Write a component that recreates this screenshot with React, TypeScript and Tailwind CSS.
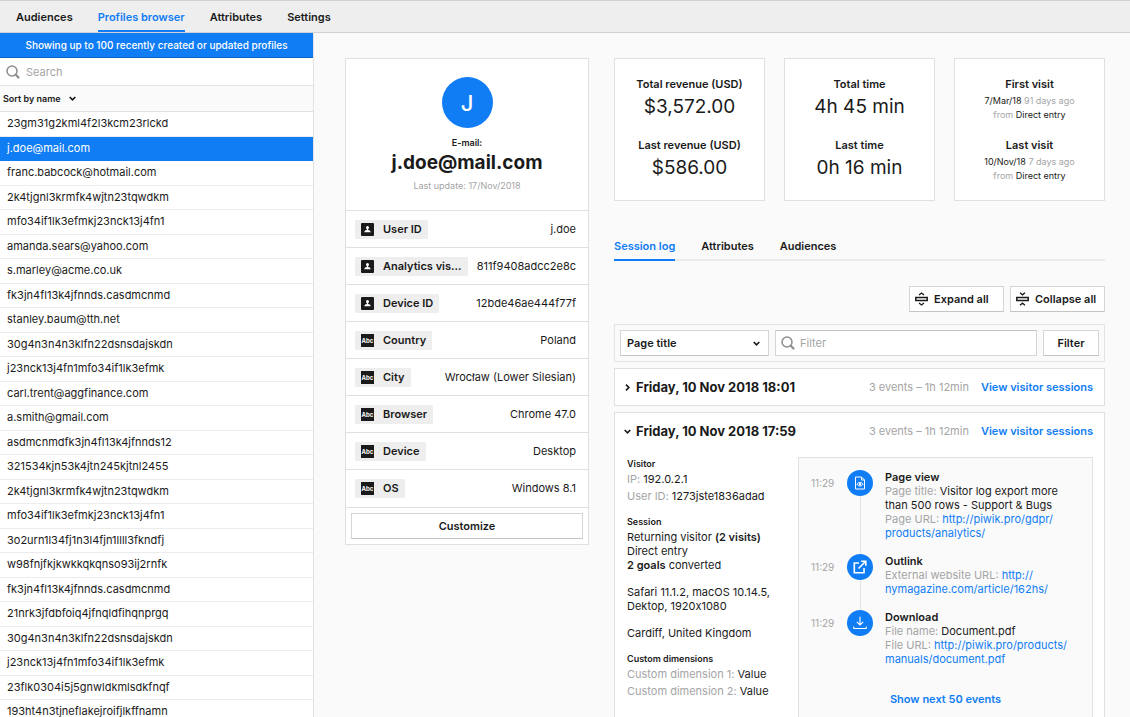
import { useState } from 'react';
import type { ReactNode } from 'react';

const NAV = ['Audiences', 'Profiles browser', 'Attributes', 'Settings'];

const PROFILES = [
  '23gm31g2kml4f2l3kcm23rlckd',
  'j.doe@mail.com',
  'franc.babcock@hotmail.com',
  '2k4tjgnl3krmfk4wjtn23tqwdkm',
  'mfo34if1lk3efmkj23nck13j4fn1',
  'amanda.sears@yahoo.com',
  's.marley@acme.co.uk',
  'fk3jn4fl13k4jfnnds.casdmcnmd',
  'stanley.baum@tth.net',
  '30g4n3n4n3klfn22dsnsdajskdn',
  'j23nck13j4fn1mfo34if1lk3efmk',
  'carl.trent@aggfinance.com',
  'a.smith@gmail.com',
  'asdmcnmdfk3jn4fl13k4jfnnds12',
  '321534kjn53k4jtn245kjtnl2455',
  '2k4tjgnl3krmfk4wjtn23tqwdkm',
  'mfo34if1lk3efmkj23nck13j4fn1',
  '3o2urn1l34fj1n3l4fjn1llll3fkndfj',
  'w98fnjfkjkwkkqkqnso93ij2rnfk',
  'fk3jn4fl13k4jfnnds.casdmcnmd',
  '21nrk3jfdbfoiq4jfnqldfihqnprgq',
  '30g4n3n4n3klfn22dsnsdajskdn',
  'j23nck13j4fn1mfo34if1lk3efmk',
  '23flk0304i5j5gnwldkmlsdkfnqf',
  '193ht4n3tjneflakejroifjlkffnamn',
];

const ATTRIBUTES = [
  { type: 'id', label: 'User ID', value: 'j.doe' },
  { type: 'id', label: 'Analytics vis...', value: '811f9408adcc2e8c' },
  { type: 'id', label: 'Device ID', value: '12bde46ae444f77f' },
  { type: 'text', label: 'Country', value: 'Poland' },
  { type: 'text', label: 'City', value: 'Wrocław (Lower Silesian)' },
  { type: 'text', label: 'Browser', value: 'Chrome 47.0' },
  { type: 'text', label: 'Device', value: 'Desktop' },
  { type: 'text', label: 'OS', value: 'Windows 8.1' },
];

const BUTTON =
  'h-[26px] border border-[#d6d6d6] border-b-[#c4c4c4] bg-white text-[11px] font-semibold cursor-pointer';

function SearchIcon() {
  return (
    <svg className="size-[14px] shrink-0" viewBox="0 0 14 14" fill="none" stroke="#8e8e8e" aria-hidden="true">
      <circle cx="6" cy="6" r="5" strokeWidth="1.5" />
      <path d="M9.800 9.800l2.700 2.700" strokeWidth="2.200" strokeLinecap="round" />
    </svg>
  );
}

function Chevron({ className = '' }: { className?: string }) {
  return (
    <svg
      className={`size-[7px] shrink-0 ${className}`}
      viewBox="0 0 7 7"
      fill="none"
      stroke="#1a1a1a"
      strokeWidth="1.700"
      aria-hidden="true"
    >
      <path d="M.7 2L3.500 4.800 6.300 2" />
    </svg>
  );
}

function AttributeIcon({ type }: { type: string }) {
  if (type === 'id') {
    return (
      <svg className="size-[13px] shrink-0" viewBox="0 0 13 13" aria-hidden="true">
        <rect width="13" height="13" rx="1" fill="#1a1a1a" />
        <path
          d="M6.500 3a1.500 1.500 0 0 0-1.500 1.600c0 .8.4 1.200.9 1.600v.8c-1.300.2-2.400.7-2.600 2.200h6.400C9.500 7.700 8.400 7.200 7.100 7v-.8c.5-.4.9-.8.9-1.600A1.500 1.500 0 0 0 6.500 3z"
          fill="#fff"
        />
      </svg>
    );
  }
  return (
    <svg className="size-[13px] shrink-0" viewBox="0 0 13 13" aria-hidden="true">
      <rect width="13" height="13" fill="#1a1a1a" />
      <text x="6.500" y="8.800" textAnchor="middle" fontSize="6" fontWeight="700" fill="#fff">
        Abc
      </text>
    </svg>
  );
}

function ExpandIcon() {
  return (
    <svg className="h-[14px] w-[13px] shrink-0" viewBox="0 0 13 14" fill="none" stroke="#1a1a1a" aria-hidden="true">
      <rect x=".8" y="5.500" width="11.400" height="3" strokeWidth="1.500" />
      <path d="M4 3l2.500-2L9 3M4 11l2.500 2L9 11" strokeWidth="1.300" />
    </svg>
  );
}

function CollapseIcon() {
  return (
    <svg className="h-[14px] w-[13px] shrink-0" viewBox="0 0 13 14" fill="none" stroke="#1a1a1a" aria-hidden="true">
      <rect x=".8" y="5.500" width="11.400" height="3" strokeWidth="1.500" />
      <path d="M4 .8l2.500 2L9 .8M4 13.200l2.500-2 2.500 2" strokeWidth="1.300" />
    </svg>
  );
}

function PageViewIcon() {
  return (
    <svg className="size-[14px]" viewBox="0 0 14 14" fill="none" stroke="#fff" strokeWidth="1" aria-hidden="true">
      <path d="M2.500 1h6l3 3v9h-9z" />
      <path d="M8.500 1v3h3" />
      <path d="M3.900 8.200c1.500-2.400 4.700-2.400 6.200 0-1.500 2.400-4.700 2.400-6.200 0z" />
      <circle cx="7" cy="8.200" r=".9" fill="#fff" />
    </svg>
  );
}

function OutlinkIcon() {
  return (
    <svg className="size-[14px]" viewBox="0 0 14 14" fill="none" stroke="#fff" strokeWidth="1.600" aria-hidden="true">
      <path d="M6 3H1.300v9.700H11V8" />
      <path d="M5.500 8.500l6.500-6.500" />
      <path d="M8.200 1.200h4.600v4.600" />
    </svg>
  );
}

function DownloadIcon() {
  return (
    <svg className="size-[14px]" viewBox="0 0 14 14" fill="none" stroke="#fff" strokeWidth="1.100" aria-hidden="true">
      <path d="M7 .8v8.200M3.800 5.800L7 9l3.200-3.200" />
      <path d="M.8 10.500v2h12.400v-2" />
    </svg>
  );
}

function Sidebar() {
  const [selected, setSelected] = useState(1);

  return (
    <aside className="w-[314px] shrink-0 flex flex-col bg-white border-r border-[#e2e2e2]">
      <p className="h-[25px] shrink-0 flex items-center justify-center bg-[#117df4] border-b border-[#0b62c4] text-white text-[10px] font-medium">
        Showing up to 100 recently created or updated profiles
      </p>
      <label className="h-7 shrink-0 flex items-center gap-[6px] pl-[6px] pt-px border-b border-[#e4e4e4]">
        <SearchIcon />
        <input
          type="search"
          placeholder="Search"
          aria-label="Search profiles"
          className="w-full outline-none text-[11px] placeholder:text-[#a5a5a5]"
        />
      </label>
      <button
        type="button"
        className="h-[26px] shrink-0 flex items-center gap-2 pl-[3px] bg-[#fafafa] border-b border-[#e0e0e0] text-[9px] font-semibold"
      >
        Sort by name
        <Chevron />
      </button>
      <ul className="min-h-0 flex-1 overflow-y-auto [scrollbar-width:none]">
        {PROFILES.map((name, i) => (
          <li key={i} className="h-[25px] even:h-6">
            <button
              type="button"
              onClick={() => setSelected(i)}
              className={`size-full flex items-center pl-[7px] pb-px border-b text-[11px] ${
                i === selected ? 'bg-[#117df4] border-[#117df4] text-white' : 'border-[#ececec]'
              }`}
            >
              {name}
            </button>
          </li>
        ))}
      </ul>
    </aside>
  );
}

function ProfileCard() {
  return (
    <section className="w-[244px] shrink-0 bg-white border border-[#e0e0e0]">
      <div className="flex flex-col items-center pt-[18px] pb-[17px]">
        <div className="size-[51px] flex items-center justify-center pt-[2px] rounded-full bg-[#117df4] text-white text-[22px] font-medium">
          J
        </div>
        <span className="mt-2 text-[9px] leading-[14px] font-semibold">E-mail:</span>
        <h1 className="text-[19px] leading-[26px] font-bold">j.doe@mail.com</h1>
        <span className="mt-[3px] text-[9px] leading-[14px] text-[#a5a5a5]">Last update: 17/Nov/2018</span>
      </div>
      <dl>
        {ATTRIBUTES.map(({ type, label, value }) => (
          <div
            key={label}
            className="h-[37px] last:h-[38px] flex items-center justify-between border-t border-[#e0e0e0] pl-[9px] pr-3"
          >
            <dt className="h-[19px] flex items-center gap-[9px] rounded-[1px] bg-[#eee] px-[6px] text-[11px] font-semibold">
              <AttributeIcon type={type} />
              {label}
            </dt>
            <dd className="text-[11px]">{value}</dd>
          </div>
        ))}
      </dl>
      <div className="border-t border-[#e0e0e0] p-[5px]">
        <button type="button" className={`w-full ${BUTTON}`}>
          Customize
        </button>
      </div>
    </section>
  );
}

function StatCard({ children }: { children: ReactNode }) {
  return (
    <div className="h-[143px] flex flex-col gap-[15px] items-center pt-[17px] bg-white border border-[#e0e0e0] text-center">
      {children}
    </div>
  );
}

function Stat({ label, value }: { label: string; value: string }) {
  return (
    <div>
      <h2 className="text-[11px] leading-4 font-semibold">{label}</h2>
      <p className="text-[19px] leading-[30px]">{value}</p>
    </div>
  );
}

function Visit({ label, date, ago }: { label: string; date: string; ago: string }) {
  return (
    <div className="text-[9px] leading-[14px] text-[#a5a5a5]">
      <h2 className="mb-[2px] text-[11px] leading-4 font-semibold text-[#1a1a1a]">{label}</h2>
      <p>
        <span className="text-[#1a1a1a]">{date}</span> {ago}
      </p>
      <p>
        from <span className="text-[#1a1a1a]">Direct entry</span>
      </p>
    </div>
  );
}

function SessionHeader({ date, open }: { date: string; open?: boolean }) {
  return (
    <div className="h-9 flex items-center pt-px pl-[9px] pr-[11px]">
      <button type="button" aria-expanded={!!open} className="flex items-center gap-[5px] text-[13px] font-bold">
        <Chevron className={open ? '' : '-rotate-90'} />
        {date}
      </button>
      <span className="ml-auto text-[11px] text-[#a5a5a5]">3 events – 1h 12min</span>
      <a href="#sessions" className="ml-3 text-[11px] font-semibold text-[#117df4]">
        View visitor sessions
      </a>
    </div>
  );
}

function Url({ parts }: { parts: string[] }) {
  return (
    <a href={parts.join('')} className="text-[#117df4]">
      {parts[0]}
      <wbr />
      {parts[1]}
    </a>
  );
}

function Event({ icon, title, last, children }: { icon: ReactNode; title: string; last?: boolean; children: ReactNode }) {
  return (
    <li className="flex">
      <time className="w-9 shrink-0 text-[10px] leading-[26px] text-[#a5a5a5]">11:29</time>
      <div className="w-[26px] shrink-0 flex flex-col items-center">
        <span className="size-[26px] shrink-0 flex items-center justify-center rounded-full bg-[#117df4]">{icon}</span>
        {!last && <span className="w-px flex-1 bg-[#e4e4e4]" />}
      </div>
      <div className="ml-3 pb-[14px] text-[11px] leading-[14px] text-[#a5a5a5]">
        <h3 className="font-semibold text-[#1a1a1a]">{title}</h3>
        {children}
      </div>
    </li>
  );
}

function VisitorInfo() {
  return (
    <div className="w-[171px] shrink-0 text-[11px] leading-[14px] [font-variant-ligatures:no-contextual]">
      <h3 className="text-[9px] font-semibold">Visitor</h3>
      <p className="mt-px">
        <span className="text-[#a5a5a5]">IP:</span> 192.0.2.1
      </p>
      <p className="mt-[3px]">
        <span className="text-[#a5a5a5]">User ID:</span> 1273jste1836adad
      </p>
      <h3 className="mt-3 text-[9px] font-semibold">Session</h3>
      <p className="mt-px">
        Returning visitor <b className="font-semibold">(2 visits)</b>
      </p>
      <p>Direct entry</p>
      <p>
        <b className="font-semibold">2 goals</b> converted
      </p>
      <p className="mt-[13px] pr-4">Safari 11.1.2, macOS 10.14.5, Dektop, 1920x1080</p>
      <p className="mt-[13px]">Cardiff, United Kingdom</p>
      <h3 className="mt-3 text-[9px] font-semibold">Custom dimensions</h3>
      <p className="mt-px">
        <span className="text-[#a5a5a5]">Custom dimension 1:</span> Value
      </p>
      <p className="mt-[3px]">
        <span className="text-[#a5a5a5]">Custom dimension 2:</span> Value
      </p>
    </div>
  );
}

function EventList() {
  return (
    <div className="min-w-0 flex-1 border border-[#e2e2e2] bg-[#fafafa] pl-3 pr-5 pt-3 pb-6">
      <ol>
        <Event icon={<PageViewIcon />} title="Page view">
          <p>
            Page title: <span className="text-[#1a1a1a]">Visitor log export more than 500 rows - Support &amp; Bugs</span>
          </p>
          <p>
            Page URL: <Url parts={['http://piwik.pro/gdpr/', 'products/analytics/']} />
          </p>
        </Event>
        <Event icon={<OutlinkIcon />} title="Outlink">
          <p>
            External website URL: <Url parts={['http://', 'nymagazine.com/article/162hs/']} />
          </p>
        </Event>
        <Event icon={<DownloadIcon />} title="Download" last>
          <p>
            File name: <span className="text-[#1a1a1a]">Document.pdf</span>
          </p>
          <p>
            File URL: <Url parts={['http://piwik.pro/products/', 'manuals/document.pdf']} />
          </p>
        </Event>
      </ol>
      <button type="button" className="block mx-auto mt-[11px] pl-2 text-[11px] font-semibold text-[#117df4]">
        Show next 50 events
      </button>
    </div>
  );
}

function SessionLog() {
  return (
    <>
      <div className="mt-[25px] flex justify-end gap-[6px]">
        <button type="button" className={`w-[95px] flex items-center gap-[6px] pl-[5px] ${BUTTON}`}>
          <ExpandIcon />
          Expand all
        </button>
        <button type="button" className={`w-[95px] flex items-center gap-[6px] pl-[5px] ${BUTTON}`}>
          <CollapseIcon />
          Collapse all
        </button>
      </div>

      <form className="mt-3 flex gap-[6px] border border-[#e4e4e4] p-[5px]" onSubmit={(e) => e.preventDefault()}>
        <div className="relative w-[149px] shrink-0">
          <select aria-label="Filter by" className={`w-full appearance-none pl-[6px] ${BUTTON}`}>
            <option>Page title</option>
          </select>
          <Chevron className="absolute right-[9px] top-[10px] pointer-events-none" />
        </div>
        <label className="h-[26px] min-w-0 flex-1 flex items-center gap-[5px] border border-[#d6d6d6] border-t-[#c4c4c4] bg-white px-[5px]">
          <SearchIcon />
          <input
            type="text"
            placeholder="Filter"
            aria-label="Filter sessions"
            className="w-full outline-none text-[11px] placeholder:text-[#a5a5a5]"
          />
        </label>
        <button type="submit" className={`w-14 shrink-0 ${BUTTON}`}>
          Filter
        </button>
      </form>

      <section className="mt-[6px] border border-[#e0e0e0] bg-white">
        <SessionHeader date="Friday, 10 Nov 2018 18:01" />
      </section>

      <section className="mt-[6px] border border-[#e0e0e0] bg-white">
        <SessionHeader date="Friday, 10 Nov 2018 17:59" open />
        <div className="mt-2 flex pl-3 pr-[11px] pb-3">
          <VisitorInfo />
          <EventList />
        </div>
      </section>
    </>
  );
}

export default function App() {
  return (
    <div className="h-screen overflow-hidden flex flex-col bg-[#fafafa] font-['Inter','Liberation_Sans',sans-serif] text-[11px] text-[#1a1a1a]">
      <nav className="h-[33px] shrink-0 flex gap-[25px] pl-4 bg-[#eee] border-y border-[#d2d2d2] font-semibold">
        {NAV.map((item) => (
          <a
            key={item}
            href="#nav"
            className={`flex items-center pt-1 border-b-2 ${
              item === 'Profiles browser' ? 'border-[#117df4] text-[#117df4]' : 'border-transparent'
            }`}
          >
            {item}
          </a>
        ))}
      </nav>

      <div className="min-h-0 flex-1 flex">
        <Sidebar />
        <main className="min-w-0 flex-1 flex items-start gap-[25px] overflow-y-auto [scrollbar-width:none] pt-[25px] pl-[31px] pr-[25px]">
          <ProfileCard />
          <div className="min-w-0 flex-1">
            <div className="grid grid-cols-3 gap-[19px]">
              <StatCard>
                <Stat label="Total revenue (USD)" value="$3,572.00" />
                <Stat label="Last revenue (USD)" value="$586.00" />
              </StatCard>
              <StatCard>
                <Stat label="Total time" value="4h 45 min" />
                <Stat label="Last time" value="0h 16 min" />
              </StatCard>
              <StatCard>
                <Visit label="First visit" date="7/Mar/18" ago="91 days ago" />
                <Visit label="Last visit" date="10/Nov/18" ago="7 days ago" />
              </StatCard>
            </div>

            <div className="mt-9 flex gap-[26px] border-b-2 border-[#ececec] font-semibold">
              {['Session log', 'Attributes', 'Audiences'].map((tab, i) => (
                <button
                  key={tab}
                  type="button"
                  className={`-mb-[2px] h-6 pb-1 border-b-2 ${
                    i === 0 ? 'border-[#117df4] text-[#117df4]' : 'border-transparent'
                  }`}
                >
                  {tab}
                </button>
              ))}
            </div>

            <SessionLog />
          </div>
        </main>
      </div>
    </div>
  );
}
